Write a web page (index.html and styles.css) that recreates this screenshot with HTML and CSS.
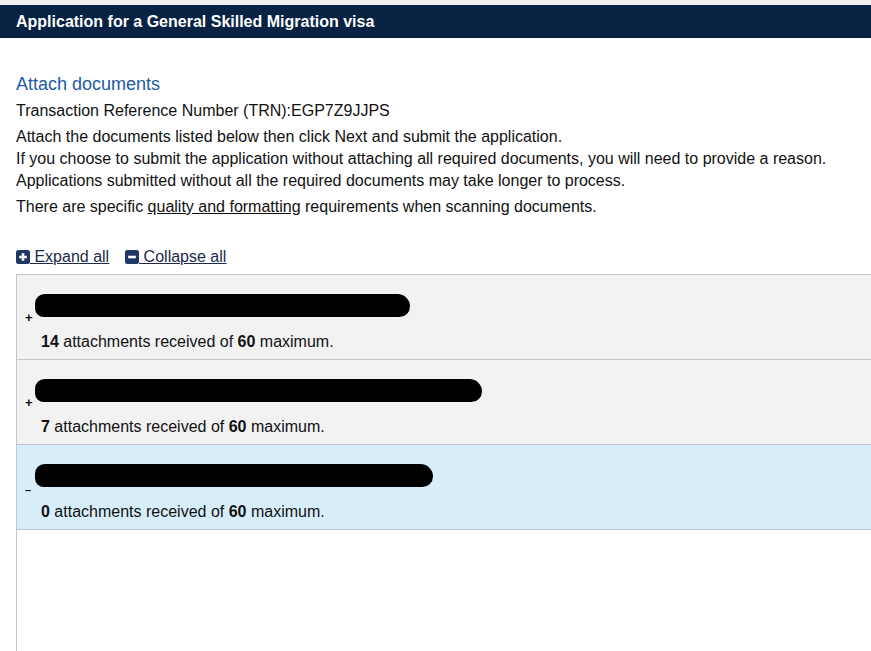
FILE: index.html
```html
<!DOCTYPE html>
<html lang="en">
<head>
  <meta charset="UTF-8">
  <meta name="viewport" content="width=device-width, initial-scale=1">
  <title>Attach documents</title>
  <link rel="stylesheet" href="styles.css">
</head>
<body>

<div class="topstrip"></div>
<div class="titlebar">Application for a General Skilled Migration visa</div>

<div class="content">
  <h2>Attach documents</h2>
  <p class="trn">Transaction Reference Number (TRN):EGP7Z9JJPS</p>
  <p class="intro">
    Attach the documents listed below then click Next and submit the application.<br>
    If you choose to submit the application without attaching all required documents, you will need to provide a reason.<br>
    Applications submitted without all the required documents may take longer to process.
  </p>
  <p class="intro">There are specific <a href="#">quality and formatting</a> requirements when scanning documents.</p>

  <div class="toggles">
    <a href="#" class="toggle">
      <svg width="14" height="14" viewBox="0 0 14 14"><rect width="14" height="14" rx="2.5" fill="#1f3763"/><path d="M7 3.2v7.6M3.2 7h7.6" stroke="#fff" stroke-width="2.6"/></svg>
      <span> Expand all</span>
    </a>
    <a href="#" class="toggle">
      <svg width="14" height="14" viewBox="0 0 14 14"><rect width="14" height="14" rx="2.5" fill="#1f3763"/><path d="M3.2 7h7.6" stroke="#fff" stroke-width="2.6"/></svg>
      <span> Collapse all</span>
    </a>
  </div>

  <div class="panel">
    <div class="row">
      <div class="row-title"><span class="sign">+</span><span class="redacted" style="width:375px"></span></div>
      <div class="row-count"><b>14</b> attachments received of <b>60</b> maximum.</div>
    </div>
    <div class="row">
      <div class="row-title"><span class="sign">+</span><span class="redacted" style="width:447px"></span></div>
      <div class="row-count"><b>7</b> attachments received of <b>60</b> maximum.</div>
    </div>
    <div class="row open">
      <div class="row-title"><span class="sign minus">–</span><span class="redacted" style="width:398px"></span></div>
      <div class="row-count"><b>0</b> attachments received of <b>60</b> maximum.</div>
    </div>
  </div>
</div>

</body>
</html>
```

FILE: styles.css
```css
* { box-sizing: border-box; }
body {
  margin: 0;
  background: #fff;
  font-family: "Liberation Sans", Arial, sans-serif;
  font-size: 16px;
  color: #111;
}
.topstrip {
  height: 5px;
  background: #f1f1f1;
}
.titlebar {
  height: 33px;
  line-height: 33px;
  padding: 0 16px;
  background: #072243;
  color: #fff;
  font-weight: bold;
  font-size: 16px;
}
.content {
  padding-left: 16px;
}
h2 {
  margin: 35px 0 0;
  font-size: 18px;
  font-weight: normal;
  color: #1d5ba4;
  line-height: 22px;
}
.trn {
  margin: 5px 0 0;
  line-height: 22px;
}
.intro {
  margin: 4px 0 0;
  line-height: 22px;
}
.intro a {
  color: #111;
}
.toggles {
  display: flex;
  gap: 16px;
  margin-top: 28px;
  line-height: 22px;
}
.toggle {
  display: flex;
  align-items: center;
  color: #1c2a4d;
}
.toggle span {
  white-space: pre;
  text-decoration: underline;
}
.panel {
  margin-top: 6px;
  border-top: 1px solid #c4c4cc;
  border-left: 1px solid #c4c4cc;
  min-height: 380px;
}
.row {
  height: 85px;
  background: #f2f2f2;
  border-bottom: 1px solid #c4c4cc;
  padding: 18px 0 0 8px;
}
.row.open {
  background: #d7eefa;
}
.row-title {
  display: flex;
  align-items: flex-end;
  height: 30px;
}
.sign {
  font-size: 13px;
  font-weight: bold;
  line-height: 10px;
  width: 10px;
}
.sign.minus {
  font-size: 11px;
  line-height: 6px;
}
.redacted {
  display: block;
  height: 23px;
  margin-bottom: 6px;
  background: #000;
  border-radius: 11px 14px 12px 10px;
}
.row-count {
  padding-left: 16px;
  margin-top: 10px;
  line-height: 18px;
}
```
